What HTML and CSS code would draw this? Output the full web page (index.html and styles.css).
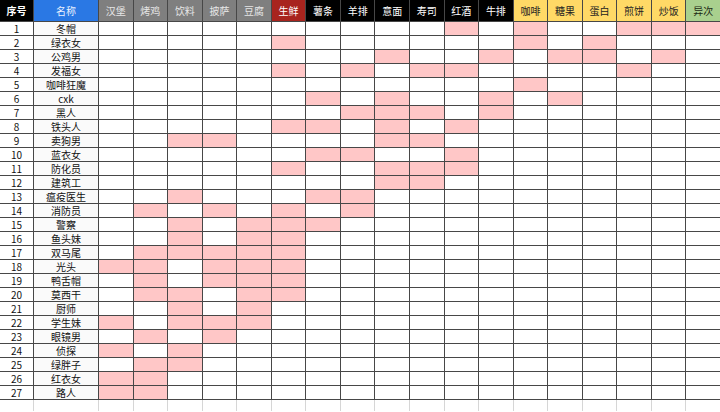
FILE: index.html
```html
<!DOCTYPE html>
<html lang="zh">
<head>
<meta charset="utf-8">
<title>Sheet</title>
<link rel="stylesheet" href="styles.css">
</head>
<body>
<div class="sheet" id="sheet">
  <div class="h h-black h-bold">序号</div>
  <div class="h h-blue">名称</div>
  <div class="h h-gray">汉堡</div>
  <div class="h h-gray">烤鸡</div>
  <div class="h h-gray">饮料</div>
  <div class="h h-gray">披萨</div>
  <div class="h h-gray">豆腐</div>
  <div class="h h-red">生鲜</div>
  <div class="h h-black">薯条</div>
  <div class="h h-black">羊排</div>
  <div class="h h-black">意面</div>
  <div class="h h-black">寿司</div>
  <div class="h h-black">红酒</div>
  <div class="h h-black">牛排</div>
  <div class="h h-yellow">咖啡</div>
  <div class="h h-yellow">糖果</div>
  <div class="h h-yellow">蛋白</div>
  <div class="h h-yellow">煎饼</div>
  <div class="h h-yellow">炒饭</div>
  <div class="h h-green">异次</div>
</div>
<div class="blank" id="blank"></div>
<script src="script.js"></script>
</body>
</html>
```

FILE: styles.css
```css
html, body {
  margin: 0;
  padding: 0;
  background: #ffffff;
}
body {
  width: 720px;
  height: 412px;
  overflow: hidden;
  font-family: "Noto Sans CJK SC", "Microsoft YaHei", sans-serif;
  font-size: 10px;
  color: #111;
}
.sheet,
.blank {
  display: grid;
  grid-template-columns: 33px 64px repeat(18, 1fr);
  column-gap: 1px;
  width: 720px;
}
.sheet {
  grid-template-rows: 21px;
  grid-auto-rows: 13px;
  row-gap: 1px;
  background: #474747;
  border-bottom: 1px solid #474747;
}
.blank {
  grid-template-rows: 11px;
  background: #d6d6d6;
}
.sheet > div,
.blank > div {
  display: flex;
  align-items: center;
  justify-content: center;
  background: #ffffff;
  line-height: 13px;
  white-space: nowrap;
  overflow: hidden;
}
.h {
  font-size: 10px;
}
.h-bold { font-weight: 700; }
.h-black { background: #000000 !important; color: #ffffff; }
.h-blue { background: #2a78e4 !important; color: #e8f0ff; }
.h-gray { background: #7f7f7f !important; color: #e6e6e6; }
.h-red { background: #a8241e !important; color: #ffffff; }
.h-yellow { background: #ffd966 !important; color: #222222; }
.h-green { background: #a9d08e !important; color: #1d2a14; }
.sheet > .num { background: #ffffff; }
.sheet > .name { background: #fafafa; }
.sheet > .p { background: #ffc7c7; }
```

FILE: script.js
```js
var names = ["冬帽","绿衣女","公鸡男","发福女","咖啡狂魔","cxk","黑人","铁头人","卖狗男","蓝衣女","防化员","建筑工","瘟疫医生","消防员","警察","鱼头妹","双马尾","光头","鸭舌帽","莫西干","厨师","学生妹","眼镜男","侦探","绿胖子","红衣女","路人"];
var pink = [[10,12,15,16,17],[5,12,14],[8,11,13,14,16],[5,7,9,10,15],[12],[6,8,11,13],[7,8,9,11],[5,6,8,10],[2,3,8,9],[6,7,10],[5,8,9,10],[8,9],[2,6,7],[1,3,5,7],[2,4,5,6],[2,4,5],[1,2,3,4,5],[0,1,3,4,5],[1,3,4,5],[1,2,4,5],[2,4],[0,2,3,4],[1,3],[0,2],[1,2],[0,1],[0,1]];
var sheet = document.getElementById("sheet");
names.forEach(function (n, i) {
  var a = document.createElement("div");
  a.className = "num";
  a.textContent = i + 1;
  sheet.appendChild(a);
  var b = document.createElement("div");
  b.className = "name";
  b.textContent = n;
  sheet.appendChild(b);
  for (var c = 0; c < 18; c++) {
    var d = document.createElement("div");
    d.className = pink[i].indexOf(c) >= 0 ? "cell p" : "cell";
    sheet.appendChild(d);
  }
});
var blank = document.getElementById("blank");
for (var k = 0; k < 20; k++) {
  blank.appendChild(document.createElement("div"));
}
```
